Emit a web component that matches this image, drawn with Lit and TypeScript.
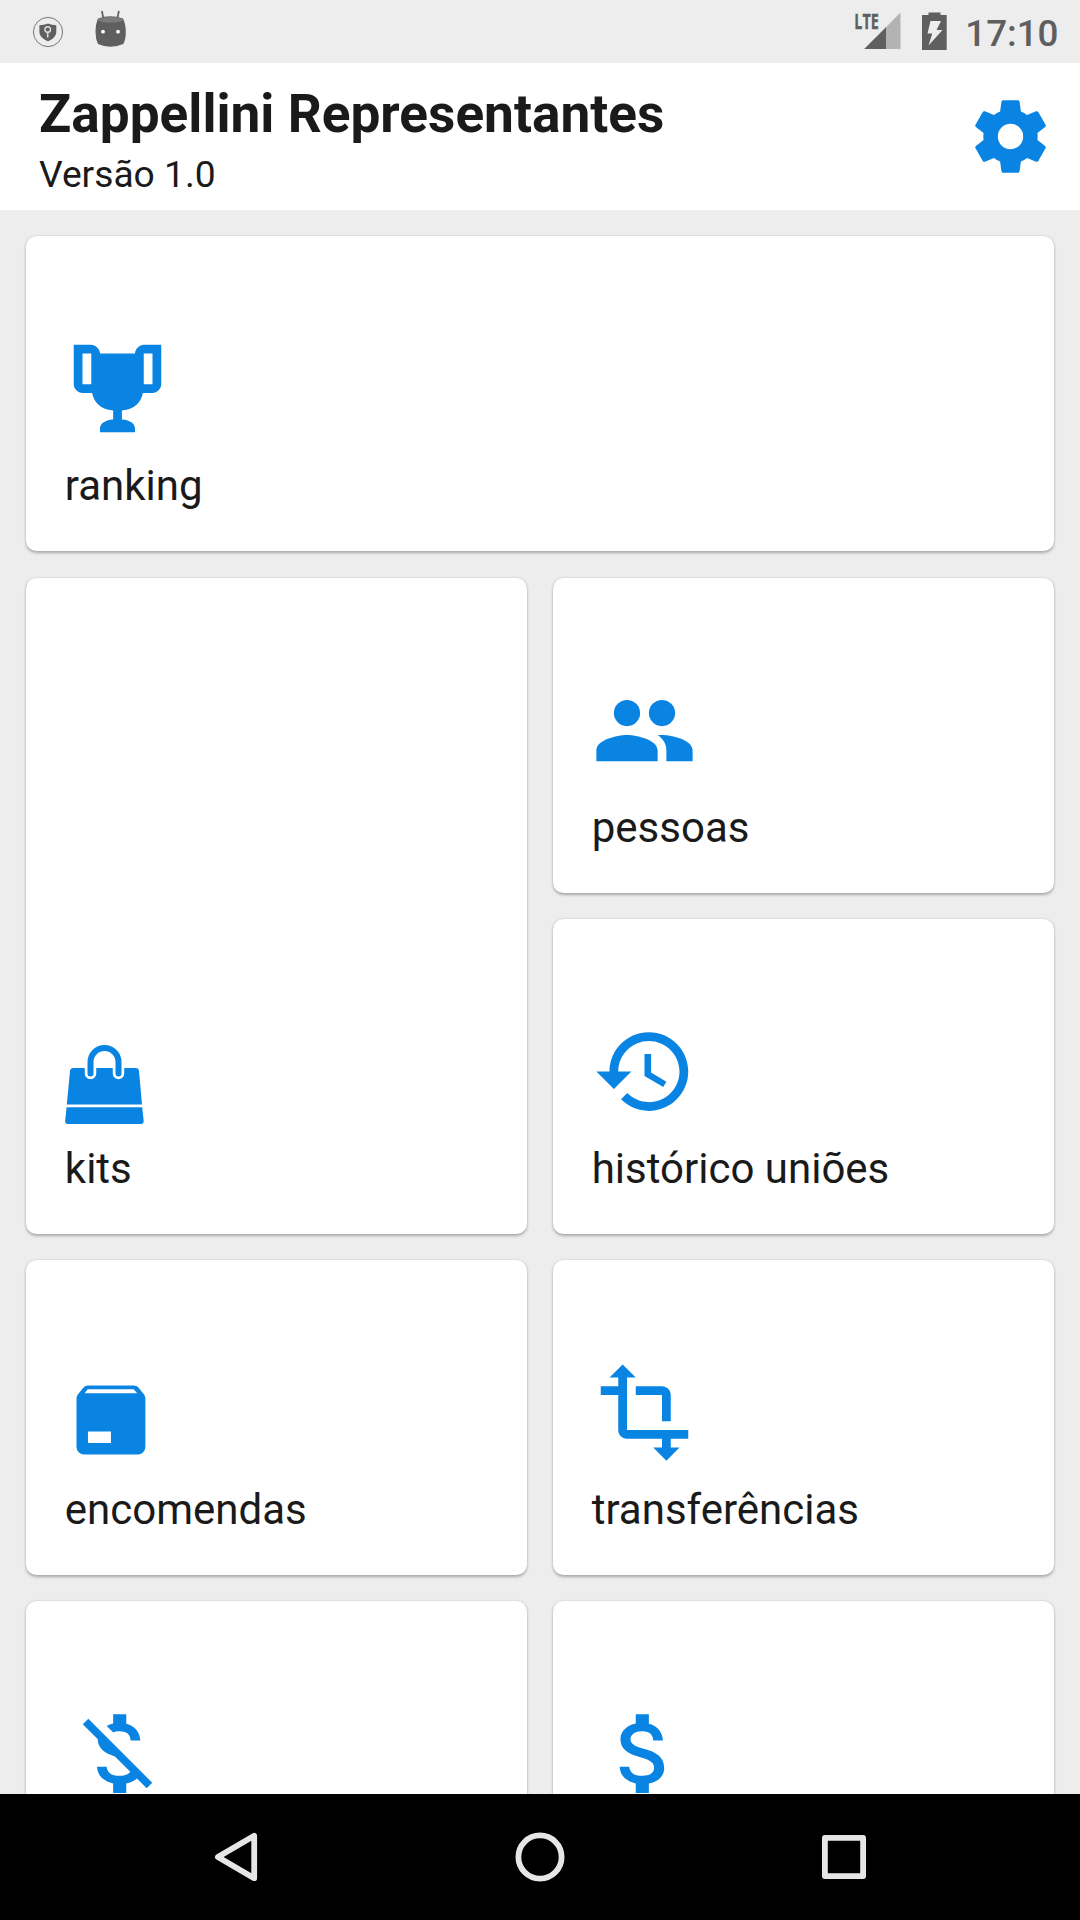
import { LitElement, html, css, svg } from "lit";
import { customElement, property } from "lit/decorators.js";

const icons: Record<string, string> = {
  trophy:
    "M20.2,2H19.5H18C17.1,2 16,3 16,4H8C8,3 6.9,2 6,2H4.5H3.8H2V11C2,12 3,13 4,13H6.2C6.6,15 7.9,16.7 11,17V19.08C9,19.2 8,20.1 8,21.2V22H16V21.2C16,20.1 15,19.2 13,19.08V17C16.1,16.7 17.4,15 17.8,13H20C21,13 22,12 22,11V2H20.2M4,11V4H6V6V11C5.1,11 4.3,11 4,11M20,11C19.7,11 18.9,11 18,11V6V4H20V11Z",
  people:
    "M16,13C15.71,13 15.38,13 15.03,13.05C16.19,13.89 17,15 17,16.5V19H23V16.5C23,14.17 18.33,13 16,13M8,13C5.67,13 1,14.17 1,16.5V19H15V16.5C15,14.17 10.33,13 8,13M8,11A3,3 0 0,0 11,8A3,3 0 0,0 8,5A3,3 0 0,0 5,8A3,3 0 0,0 8,11M16,11A3,3 0 0,0 19,8A3,3 0 0,0 16,5A3,3 0 0,0 13,8A3,3 0 0,0 16,11Z",
  history:
    "M13 3c-4.97 0-9 4.03-9 9H1l3.89 3.89.07.14L9 12H6c0-3.87 3.13-7 7-7s7 3.13 7 7-3.13 7-7 7c-1.93 0-3.68-.79-4.94-2.06l-1.42 1.42C8.27 19.99 10.51 21 13 21c4.97 0 9-4.03 9-9s-4.03-9-9-9zm-1 5v5l4.28 2.54.72-1.21-3.5-2.08V8H12z",
  box:
    "M5.12,5H18.87L17.93,4H5.93L5.12,5M20.54,5.23C20.83,5.57 21,6 21,6.5V19A2,2 0 0,1 19,21H5A2,2 0 0,1 3,19V6.5C3,6 3.17,5.57 3.46,5.23L4.84,3.55C5.12,3.21 5.53,3 6,3H18C18.47,3 18.88,3.21 19.15,3.55L20.54,5.23M6,18H12V15H6V18Z",
  transform:
    "M22 18v-2H8V4h2L7 1 4 4h2v2H2v2h4v8c0 1.1.9 2 2 2h8v2h-2l3 3 3-3h-2v-2h4zM10 8h6v6h2V8c0-1.1-.9-2-2-2h-6v2z",
  moneyOff:
    "M12.5 6.9c1.78 0 2.44.85 2.5 2.1h2.21c-.07-1.72-1.12-3.3-3.21-3.81V3h-3v2.16c-.53.12-1.03.3-1.48.54l1.47 1.47c.41-.17.91-.27 1.51-.27zM5.33 4.06L4.06 5.33 7.5 8.77c0 2.08 1.56 3.21 3.91 3.91l3.51 3.51c-.34.48-1.05.91-2.42.91-2.06 0-2.87-.92-2.98-2.1h-2.2c.12 2.19 1.76 3.42 3.68 3.83V21h3v-2.15c.96-.18 1.82-.55 2.45-1.12l2.22 2.22 1.27-1.27L5.33 4.06z",
  money:
    "M11.8 10.9c-2.27-.59-3-1.2-3-2.15 0-1.09 1.01-1.85 2.7-1.85 1.78 0 2.44.85 2.5 2.1h2.21c-.07-1.72-1.12-3.3-3.21-3.81V3h-3v2.16c-1.94.42-3.5 1.68-3.5 3.61 0 2.31 1.91 3.46 4.7 4.13 2.5.6 3 1.48 3 2.41 0 .69-.49 1.79-2.7 1.79-2.06 0-2.87-.92-2.98-2.1h-2.2c.12 2.19 1.76 3.42 3.68 3.83V21h3v-2.15c1.95-.37 3.5-1.5 3.5-3.55 0-2.84-2.43-3.81-4.7-4.4z",
  gear:
    "M12,15.5A3.5,3.5 0 0,1 8.5,12A3.5,3.5 0 0,1 12,8.5A3.5,3.5 0 0,1 15.5,12A3.5,3.5 0 0,1 12,15.5M19.43,12.97C19.47,12.65 19.5,12.33 19.5,12C19.5,11.67 19.47,11.34 19.43,11L21.54,9.37C21.73,9.22 21.78,8.95 21.66,8.73L19.66,5.27C19.54,5.05 19.27,4.96 19.05,5.05L16.56,6.05C16.04,5.66 15.5,5.32 14.87,5.07L14.5,2.42C14.46,2.18 14.25,2 14,2H10C9.75,2 9.54,2.18 9.5,2.42L9.13,5.07C8.5,5.32 7.96,5.66 7.44,6.05L4.95,5.05C4.73,4.96 4.46,5.05 4.34,5.27L2.34,8.73C2.21,8.95 2.27,9.22 2.46,9.37L4.57,11C4.53,11.34 4.5,11.67 4.5,12C4.5,12.33 4.53,12.65 4.57,12.97L2.46,14.63C2.27,14.78 2.21,15.05 2.34,15.27L4.34,18.73C4.46,18.95 4.73,19.03 4.95,18.95L7.44,17.94C7.96,18.34 8.5,18.68 9.13,18.93L9.5,21.58C9.54,21.82 9.75,22 10,22H14C14.25,22 14.46,21.82 14.5,21.58L14.87,18.93C15.5,18.67 16.04,18.34 16.56,17.94L19.05,18.95C19.27,19.03 19.54,18.95 19.66,18.73L21.66,15.27C21.78,15.05 21.73,14.78 21.54,14.63L19.43,12.97Z",
};

const bag = svg`
  <path fill="currentColor" d="M8.500 23H70.500Q73.800 23 74 26L77 59.600H1.800L5 26Q5.200 23 8.500 23Z"/>
  <path fill="currentColor" d="M1.600 62.200H77.200L78.700 76Q78.800 79 75.800 79H3Q0 79 .1 76Z"/>
  <path fill="none" stroke="#fff" stroke-width="11.500" stroke-linecap="round" d="M25.500 22V28.500M53.500 22V28.500"/>
  <path fill="none" stroke="currentColor" stroke-width="6" stroke-linecap="round" d="M25.500 28.500V17a14 14 0 0 1 28 0V28.500"/>`;

@customElement("menu-card")
export class MenuCard extends LitElement {
  @property() icon = "";
  @property() label = "";

  static styles = css`
    :host {
      display: flex;
      flex-direction: column;
      justify-content: flex-end;
      box-sizing: border-box;
      padding: 0 38.600px 40.900px;
      background: #fff;
      border-radius: 10.500px;
      box-shadow: 0 1.500px 3px rgba(0, 0, 0, 0.28), 0 0 2px rgba(0, 0, 0, 0.08);
    }
    .icon {
      display: block;
      width: 105px;
      height: 105px;
      color: #0984e3;
      fill: currentColor;
      margin-bottom: 19.900px;
      flex: none;
      overflow: visible;
    }
    .icon.box {
      width: 91.875px;
      height: 91.875px;
      margin-bottom: 19.400px;
    }
    .icon.bag {
      width: 79px;
      height: 79px;
    }
    .label {
      font-size: 42px;
      line-height: 49px;
      min-height: 49px;
      color: #1a1a1a;
      white-space: nowrap;
    }
  `;

  render() {
    return html`
      ${this.icon === "bag"
        ? html`<svg class="icon bag" viewBox="0 0 79 79">${bag}</svg>`
        : html`<svg class="icon ${this.icon}" viewBox="0 0 24 24"><path d=${icons[this.icon]}></path></svg>`}
      <div class="label">${this.label}</div>
    `;
  }
}

@customElement("status-bar")
export class StatusBar extends LitElement {
  static styles = css`
    :host {
      display: flex;
      align-items: flex-start;
      justify-content: space-between;
      height: 63px;
      box-sizing: border-box;
      padding: 0 21.500px 0 32px;
      background: #ededed;
      color: #5f5f5f;
    }
    .group {
      display: flex;
      height: 63px;
    }
    .glyph {
      display: block;
      height: 63px;
    }
    .clock {
      font-size: 36.750px;
      font-weight: 500;
      line-height: 63px;
      padding-top: 2px;
      margin-left: 17.500px;
    }
    .lte {
      font: 700 22px "Liberation Sans Narrow", "Open Sans", Roboto, sans-serif;
      stroke: #5f5f5f;
      stroke-width: 0.400;
    }
  `;

  render() {
    return html`
      <div class="group">
        <svg class="glyph" width="100" viewBox="32 0 100 63">
          <circle cx="48" cy="32" r="14.600" fill="none" stroke="#777" stroke-width="1"></circle>
          <path fill="#5f5f5f" d="M48 23.500c3 1.300 5.500 1.700 8.300 1.700v6.300c0 4.500-3.300 7.800-8.300 9.800c-5-2-8.600-5.300-8.600-9.800v-6.300c3 0 5.600-.400 8.600-1.700z"></path>
          <circle cx="47.700" cy="29.500" r="2.800" fill="none" stroke="#ddd" stroke-width="1.400"></circle>
          <path stroke="#ddd" stroke-width="1.600" d="M47.700 32.300V37.500"></path>
          <path stroke="#5f5f5f" stroke-width="1.700" stroke-linecap="round" d="M102 11.500L103.300 18M118.800 11.500L117.500 18"></path>
          <path fill="#5f5f5f" d="M98 18.500Q110 14 123 18.500Q125.800 24 125.800 32Q125.800 40 123.200 44Q117 46.800 110.500 46.800Q104 46.800 98 44Q95.500 39 95.500 32Q95.500 24 98 18.500Z"></path>
          <ellipse cx="110.500" cy="19.800" rx="12.400" ry="2.900" fill="#7a7a7a"></ellipse>
          <circle cx="103" cy="31.700" r="1.900" fill="#fff"></circle>
          <circle cx="118" cy="31.700" r="1.900" fill="#fff"></circle>
        </svg>
      </div>
      <div class="group">
        <svg class="glyph" width="94" viewBox="854 0 94 63">
          <path fill="#b3b3b3" d="M900.500 12.500V49H864.500Z"></path>
          <path fill="#5f5f5f" d="M886 27.200V49H864.200Z"></path>
          <text class="lte" x="854.300" y="29" textLength="24.500" lengthAdjust="spacingAndGlyphs" fill="#5f5f5f">LTE</text>
          <path fill="#5f5f5f" d="M928.500 12.500H940.500V15H946.700V50H922V15H928.500Z"></path>
          <path fill="#ededed" d="M930.500 21H941L936.500 30H942.500L928.500 45.500L932.300 33.500H927.500Z"></path>
        </svg>
        <div class="clock">17:10</div>
      </div>
    `;
  }
}

@customElement("app-root")
export class AppRoot extends LitElement {
  static styles = css`
    :host {
      display: flex;
      flex-direction: column;
      width: 1080px;
      height: 1920px;
      overflow: hidden;
      background: #ededed;
      font-family: Roboto, sans-serif;
    }
    .header {
      display: flex;
      align-items: center;
      justify-content: space-between;
      box-sizing: border-box;
      height: 147px;
      flex: none;
      padding: 0 26px 0 39px;
      background: #fff;
      color: #1a1a1a;
    }
    .heading {
      padding-top: 6px;
    }
    .title {
      margin: 0;
      font-size: 53.200px;
      font-weight: 700;
      line-height: 62px;
      white-space: nowrap;
    }
    .version {
      font-size: 37.200px;
      line-height: 43px;
      margin-top: 8px;
    }
    .gear {
      width: 87px;
      height: 87px;
      margin-bottom: 1px;
      fill: #0984e3;
    }
    .scroll {
      flex: 1;
      min-height: 0;
      overflow: hidden;
    }
    .grid {
      display: grid;
      grid-template-columns: 1fr 1fr;
      grid-auto-rows: 315px;
      gap: 26.250px;
      padding: 26.250px;
    }
    .wide {
      grid-column: span 2;
    }
    .tall {
      grid-row: span 2;
    }
    .nav {
      display: flex;
      flex: none;
      height: 126px;
      background: #000;
      align-items: center;
      justify-content: space-between;
      padding: 0 211px;
    }
    .key {
      display: block;
      width: 50px;
      height: 50px;
      fill: none;
      stroke: #e6e6e6;
      stroke-width: 5.800;
      stroke-linejoin: round;
    }
  `;

  render() {
    return html`
      <status-bar></status-bar>
      <header class="header">
        <div class="heading">
          <h1 class="title">Zappellini Representantes</h1>
          <div class="version">Versão 1.0</div>
        </div>
        <svg class="gear" viewBox="0 0 24 24"><path d=${icons.gear}></path></svg>
      </header>
      <main class="scroll">
        <div class="grid">
          <menu-card class="wide" icon="trophy" label="ranking"></menu-card>
          <menu-card class="tall" icon="bag" label="kits"></menu-card>
          <menu-card icon="people" label="pessoas"></menu-card>
          <menu-card icon="history" label="histórico uniões"></menu-card>
          <menu-card icon="box" label="encomendas"></menu-card>
          <menu-card icon="transform" label="transferências"></menu-card>
          <menu-card icon="moneyOff" label=""></menu-card>
          <menu-card icon="money" label=""></menu-card>
        </div>
      </main>
      <nav class="nav">
        <svg class="key" viewBox="0 0 50 50"><path d="M43.200 3.800V46.200L6.900 25Z"></path></svg>
        <svg class="key" viewBox="0 0 50 50"><circle cx="25" cy="25" r="21.600"></circle></svg>
        <svg class="key" viewBox="0 0 50 50"><rect x="5.900" y="5.900" width="38.200" height="38.200"></rect></svg>
      </nav>
    `;
  }
}
